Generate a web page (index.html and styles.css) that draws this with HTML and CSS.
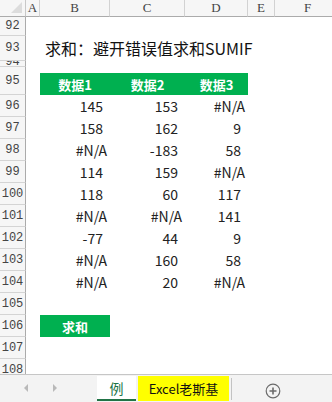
FILE: index.html
```html
<!DOCTYPE html>
<html>
<head>
<meta charset="utf-8">
<link rel="stylesheet" href="styles.css">
</head>
<body>
<div class="app">
  <div class="sheet">
    <div class="row colhead">
      <div class="corner"><span class="tri"></span></div>
      <div class="ch">A</div>
      <div class="ch">B</div>
      <div class="ch">C</div>
      <div class="ch">D</div>
      <div class="ch">E</div>
      <div class="ch">F</div>
    </div>
    <div class="row h19"><div class="rh">92</div></div>
    <div class="row h25"><div class="rh">93</div><div class="c"></div><div class="c title">求和：避开错误值求和SUMIF</div></div>
    <div class="row h6"><div class="rh clip">94</div></div>
    <div class="row h28">
      <div class="rh">95</div><div class="c"></div>
      <div class="c head">数据1</div><div class="c head">数据2</div><div class="c head">数据3</div>
    </div>
    <div class="row"><div class="rh">96</div><div class="c"></div><div class="c num">145</div><div class="c num">153</div><div class="c err">#N/A</div></div>
    <div class="row"><div class="rh">97</div><div class="c"></div><div class="c num">158</div><div class="c num">162</div><div class="c num">9</div></div>
    <div class="row"><div class="rh">98</div><div class="c"></div><div class="c err">#N/A</div><div class="c num">-183</div><div class="c num">58</div></div>
    <div class="row"><div class="rh">99</div><div class="c"></div><div class="c num">114</div><div class="c num">159</div><div class="c err">#N/A</div></div>
    <div class="row"><div class="rh">100</div><div class="c"></div><div class="c num">118</div><div class="c num">60</div><div class="c num">117</div></div>
    <div class="row"><div class="rh">101</div><div class="c"></div><div class="c err">#N/A</div><div class="c err">#N/A</div><div class="c num">141</div></div>
    <div class="row"><div class="rh">102</div><div class="c"></div><div class="c num">-77</div><div class="c num">44</div><div class="c num">9</div></div>
    <div class="row"><div class="rh">103</div><div class="c"></div><div class="c err">#N/A</div><div class="c num">160</div><div class="c num">58</div></div>
    <div class="row"><div class="rh">104</div><div class="c"></div><div class="c err">#N/A</div><div class="c num">20</div><div class="c err">#N/A</div></div>
    <div class="row"><div class="rh">105</div></div>
    <div class="row"><div class="rh">106</div><div class="c"></div><div class="c head sum">求和</div></div>
    <div class="row"><div class="rh">107</div></div>
    <div class="row"><div class="rh">108</div></div>
  </div>
  <div class="tabbar">
    <div class="nav">
      <svg width="6" height="8" viewBox="0 0 6 8"><path d="M5 0 L1 4 L5 8 Z" fill="#b9b9b9"/></svg>
      <svg width="6" height="8" viewBox="0 0 6 8"><path d="M1 0 L5 4 L1 8 Z" fill="#b9b9b9"/></svg>
    </div>
    <div class="tab active">例</div>
    <div class="tab yellow">Excel老斯基</div>
    <div class="sep"></div>
    <div class="add">
      <svg width="16" height="16" viewBox="0 0 16 16"><circle cx="8" cy="8" r="6.8" fill="none" stroke="#6b6b6b" stroke-width="1.2"/><path d="M8 4.5 V11.5 M4.5 8 H11.5" stroke="#6b6b6b" stroke-width="1.6"/></svg>
    </div>
  </div>
</div>
</body>
</html>
```
FILE: styles.css
```css
html, body {
  margin: 0;
  padding: 0;
  background: #ffffff;
  overflow: hidden;
}
.app {
  width: 332px;
  height: 402px;
  display: flex;
  flex-direction: column;
  overflow: hidden;
  font-family: "Noto Sans CJK SC", "Noto Sans", sans-serif;
}
.sheet {
  height: 374px;
  overflow: hidden;
  flex: none;
}
.row {
  display: grid;
  grid-template-columns: 26px 14px 70px 75px 63px 27px 66px;
  height: 22px;
}
.h19 { height: 19px; }
.h25 { height: 25px; }
.h6 { height: 6px; }
.h28 { height: 28px; }
.colhead {
  height: 17px;
  background: #f6f6f6;
}
.corner {
  border-right: 1px solid #c8c8c8;
  border-bottom: 1px solid #ababab;
  position: relative;
  background: #f6f6f6;
}
.tri {
  position: absolute;
  right: 3px;
  bottom: 3px;
  width: 0;
  height: 0;
  border-left: 11px solid transparent;
  border-bottom: 11px solid #dcdcdc;
}
.ch {
  font-family: "Liberation Serif", serif;
  font-size: 13px;
  color: #444;
  text-align: center;
  line-height: 16px;
  border-right: 1px solid #d2d2d2;
  border-bottom: 1px solid #ababab;
}
.rh {
  background: #f6f6f6;
  border-right: 1px solid #ababab;
  border-bottom: 1px solid #d4d4d4;
  font-family: "Liberation Mono", monospace;
  font-size: 12px;
  color: #444;
  display: flex;
  align-items: center;
  justify-content: center;
  overflow: hidden;
  box-sizing: border-box;
}
.rh.clip {
  align-items: flex-end;
  line-height: 8px;
}
.c {
  font-size: 14px;
  color: #222;
  display: flex;
  align-items: center;
  white-space: nowrap;
}
.title {
  font-size: 16px;
  color: #111;
  padding-left: 5px;
  align-items: flex-end;
  padding-bottom: 1px;
  overflow: visible;
}
.head {
  font-size: 13px;
  background: #00b050;
  color: #ffffff;
  font-weight: bold;
  justify-content: center;
  margin-top: 6px;
}
.head.sum {
  margin-top: 0;
}
.num {
  justify-content: flex-end;
  padding-right: 7px;
}
.err {
  justify-content: flex-end;
  padding-right: 3px;
}
.tabbar {
  height: 28px;
  flex: none;
  box-sizing: border-box;
  border-top: 1px solid #c6c6c6;
  background: #f3f3f3;
  display: flex;
  align-items: flex-start;
}
.nav {
  width: 97px;
  display: flex;
  gap: 23px;
  padding-left: 23px;
  padding-top: 9px;
  box-sizing: border-box;
}
.tab {
  height: 25px;
  margin-top: 1px;
  box-sizing: border-box;
  font-size: 13px;
  display: flex;
  align-items: center;
  justify-content: center;
}
.tab.active {
  width: 39px;
  background: #ffffff;
  color: #217346;
  font-size: 14px;
  border-bottom: 2px solid #217346;
  padding-top: 1px;
}
.tab.yellow {
  width: 91px;
  margin-left: 2px;
  background: #ffff00;
  color: #111;
}
.sep {
  width: 1px;
  height: 22px;
  margin-top: 3px;
  margin-left: 2px;
  background: #c3c3c3;
}
.add {
  margin-left: 33px;
  padding-top: 5px;
}
```
